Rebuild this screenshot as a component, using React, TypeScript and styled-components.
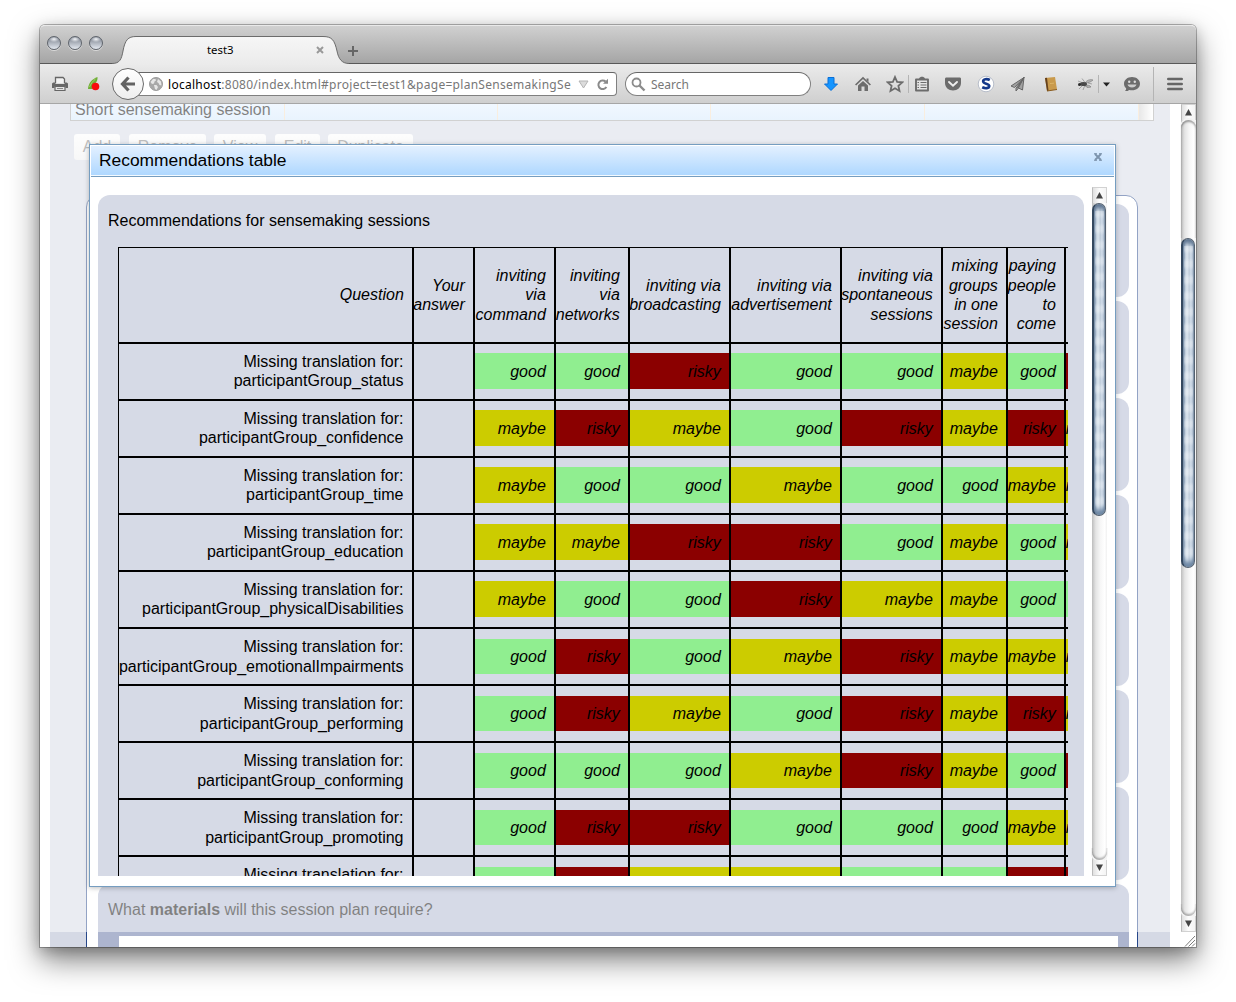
import React from "react";
import styled, { createGlobalStyle, css } from "styled-components";

const Global = createGlobalStyle`
  html, body { margin: 0; padding: 0; background: #fff; }
  * { box-sizing: border-box; }
  body { font-family: "Liberation Sans", Arial, sans-serif; font-size: 16px; color: #000; overflow: hidden; }
`;

/* ---------- window ---------- */

const Desktop = styled.div`
  width: 1236px;
  height: 1002px;
  padding: 25px 40px 0;
  overflow: hidden;
  background: #fff;
`;

const Window = styled.div`
  width: 1156px;
  height: 922px;
  display: flex;
  flex-direction: column;
  border-radius: 5px 5px 0 0;
  box-shadow: 0 0 0 1px rgba(0, 0, 0, 0.28), 0 13px 30px rgba(0, 0, 0, 0.5), 0 4px 14px rgba(0, 0, 0, 0.2);
`;

const TabStrip = styled.div`
  flex: none;
  height: 39px;
  display: flex;
  border-top: 1px solid #e9e9e9;
  border-radius: 5px 5px 0 0;
  background: linear-gradient(#d0d0d0, #a4a4a4);
  box-shadow: inset 0 -1px 0 #595959;
`;

const Lights = styled.div`
  display: flex;
  gap: 7px;
  padding: 10px 0 0 7px;
`;

const Light = styled.span`
  width: 14px;
  height: 14px;
  border-radius: 50%;
  border: 1px solid #5f646c;
  background: radial-gradient(ellipse 5px 3px at 50% 18%, #f4f6f9, transparent), linear-gradient(#777e8a, #a9afb9 45%, #e4e9f0);
  box-shadow: 0 1px 0 rgba(255, 255, 255, 0.5);
`;

const Tab = styled.div`
  position: relative;
  width: 244px;
  margin-left: 9px;
  height: 39px;
  display: flex;
  align-items: center;
  padding: 11px 0 0;
`;

const TabShape = styled.svg`
  position: absolute;
  left: 0;
  top: 0;
`;

const TabTitle = styled.span`
  position: relative;
  flex: 1;
  padding-left: 95px;
  font: 11.4px "Noto Sans", "Open Sans", sans-serif;
  line-height: 16px;
  margin-top: -2px;
`;

const TabClose = styled.svg`
  position: relative;
  margin: -2px 32px 0 0;
`;

const PlusIcon = styled.svg`
  margin: 19px 0 0 -9px;
`;

const Toolbar = styled.div`
  flex: none;
  height: 40px;
  display: flex;
  align-items: center;
  padding: 1px 0 0 11px;
  border-bottom: 1px solid #a6a6a6;
  background: linear-gradient(#ebebeb, #cfcfcf);
`;

const Icon = styled.svg<{ $gap: number }>`
  flex: none;
  margin-left: ${(p) => p.$gap}px;
`;

const Divider = styled.span<{ $gap: number; $h: number }>`
  flex: none;
  width: 1px;
  height: ${(p) => p.$h}px;
  margin-left: ${(p) => p.$gap}px;
  background: #b4b4b4;
`;

const BackButton = styled.div`
  position: relative;
  z-index: 1;
  flex: none;
  width: 32px;
  height: 32px;
  margin-left: 9px;
  display: flex;
  align-items: center;
  justify-content: center;
  border: 1px solid #6a6a6a;
  border-radius: 50%;
  background: linear-gradient(#fff, #eeeeee);
`;

const fieldBox = css`
  flex: none;
  height: 24px;
  display: flex;
  align-items: center;
  border: 1px solid #808080;
  border-top-color: #666;
  background: #fff;
  font: 12px "Noto Sans", "Open Sans", sans-serif;
  color: #777;
`;

const UrlBar = styled.div`
  ${fieldBox}
  width: 483px;
  margin-left: -10px;
  padding-left: 14px;
  border-radius: 0 4px 4px 0;
  white-space: nowrap;
`;

const UrlText = styled.span`
  width: 410px;
  margin-left: 5px;
  letter-spacing: 0.285px;
  b { color: #000; font-weight: normal; }
`;

const SearchBox = styled.div`
  ${fieldBox}
  width: 186px;
  margin-left: 8px;
  padding-left: 5px;
  gap: 5px;
  border-radius: 12px;
`;

const Viewport = styled.div`
  position: relative;
  flex: 1;
  display: flex;
  overflow: hidden;
  background: #fff;
`;

/* ---------- page below the dialog ---------- */

const Page = styled.div`
  width: 1120px;
  margin: 0 11px 0 10px;
  padding: 0 16px 0 20px;
  background: #d5d9e5;
  overflow: hidden;
`;

const Grid = styled.div`
  height: 17px;
  display: flex;
  border: 1px solid #a3a3a3;
  border-top: 0;
  background: linear-gradient(#e2f0ff, #d2e8fb);
`;

const GridCell = styled.div<{ $w: number }>`
  width: ${(p) => p.$w}px;
  padding-left: 4px;
  border-right: 1px solid #f2dcbe;
  line-height: 18px;
  margin-top: -4px;
  padding-top: 1px;
  white-space: nowrap;
`;

const GridGutter = styled.div`
  flex: 1;
  background: linear-gradient(90deg, #d0d0d0, #fff);
`;

const ButtonRow = styled.div`
  display: flex;
  padding: 13px 0 0 4px;
  height: 74px;
  align-items: flex-start;
`;

const PushButton = styled.span<{ $w: number; $gap: number }>`
  width: ${(p) => p.$w}px;
  height: 26px;
  margin-right: ${(p) => p.$gap}px;
  border-radius: 3px;
  line-height: 25px;
  text-align: center;
  color: #7c7c7c;
  background: linear-gradient(#fbfbfb, #efefef);
`;

const Questions = styled.div`
  width: 1052px;
  height: 800px;
  margin-left: 16px;
  padding: 8px 8px 0 11px;
  display: flex;
  flex-direction: column;
  gap: 4px;
  border: 1px solid #26478a;
  border-radius: 12px;
  background: #fff;
`;

const Question = styled.div<{ $last?: boolean }>`
  flex: none;
  height: ${(p) => (p.$last ? "200px" : "93.14px")};
  padding: 17px 11px 0 10px;
  border-radius: 12px;
  background: #adb5cf;
  line-height: 18px;
`;

const Answer = styled.div`
  height: 100px;
  margin: 17px 0 0 11px;
  background: #fff;
  width: 999px;
`;

const Mask = styled.div`
  position: absolute;
  left: 0;
  top: 0;
  width: 1141px;
  height: 828px;
  background: rgba(255, 255, 255, 0.5);
`;

/* ---------- aqua scroll bars ---------- */

const Bar = styled.div`
  flex: none;
  width: 15px;
  display: flex;
  flex-direction: column;
  background: linear-gradient(90deg, #bdbdbd, #e4e4e4 25%, #f6f6f6 55%, #fff 85%, #f0f0f0);
`;

const BarEnd = styled.div<{ $down?: boolean }>`
  flex: none;
  height: 16px;
  display: flex;
  align-items: center;
  justify-content: center;
  border: 1px solid #d2d2d2;
  border-left-color: #bbb;
  border-${(p) => (p.$down ? "top" : "bottom")}: 0;
  background: linear-gradient(90deg, #e0e0e0, #fcfcfc 50%, #f4f4f4);
`;

const TrackCap = styled.div<{ $h: number; $bottom?: boolean }>`
  flex: none;
  height: ${(p) => p.$h}px;
  border-radius: ${(p) => (p.$bottom ? "0 0 8px 8px" : "8px 8px 0 0")};
  box-shadow: ${(p) =>
    p.$bottom ? "inset 0 -2px 2px rgba(0,0,0,.28), 0 1px 0 1px #f2f2f2" : "inset 0 2px 2px rgba(0,0,0,.35), 0 -1px 0 1px #f2f2f2"};
`;

const Thumb = styled.div<{ $h: number }>`
  flex: none;
  width: 14px;
  height: ${(p) => p.$h}px;
  border-radius: 7px;
  border: 1px solid #53606f;
  border-left: 2px solid #34485f;
  box-shadow: inset 0 4px 4px #5d7490, inset 0 -5px 4px #6f89a6;
  background: linear-gradient(90deg, #9fb2c7, #e6eff7 25%, #d6e0ea 45%, #bdc9d6 55%, #dfebf6 72%, #f2f8fd 88%, #a9b4c0);
  position: relative;
  overflow: hidden;
  &::after {
    content: "";
    position: absolute;
    inset: 7px 1px;
    background: repeating-linear-gradient(rgba(255, 255, 255, 0.28) 0 4px, rgba(255, 255, 255, 0) 8px 12px, rgba(255, 255, 255, 0.28) 16px);
  }
`;

const Corner = styled.div`
  flex: none;
  height: 15px;
  padding: 3px 0 0 3px;
  background: #fff;
  line-height: 0;
`;

const Spacer = styled.div`
  flex: 1;
`;

/* ---------- dialog ---------- */

const Dialog = styled.div`
  position: absolute;
  left: 49px;
  top: 40px;
  width: 1027px;
  height: 743px;
  display: flex;
  flex-direction: column;
  border: 1px solid #759dc0;
  background: #fff;
  box-shadow: 0 1px 5px rgba(0, 0, 0, 0.25);
`;

const DialogHeader = styled.div`
  flex: none;
  height: 32px;
  display: flex;
  justify-content: space-between;
  padding: 5px 11px 0 8px;
  border: 1px solid #fff;
  border-bottom: 0;
  background: linear-gradient(#e3f0ff, #abd6ff);
  box-shadow: inset 0 -1px 0 #759dc0, inset 0 -2px 0 #f4faff;
  font-size: 17.4px;
  line-height: 18px;
`;

const DialogClose = styled.svg`
  margin-top: 1px;
`;

const DialogBody = styled.div`
  height: 699px;
  display: flex;
  padding: 10px 8px 0;
`;

const Sheet = styled.div`
  width: 986px;
  height: 681px;
  margin: 8px 8px 0 0;
  padding: 17px 16px 0 10px;
  border-radius: 12px 12px 0 0;
  background: #d6dae6;
  overflow: hidden;
`;

const SheetTitle = styled.div`
  height: 35px;
  line-height: 18px;
`;

const Table = styled.div`
  margin-left: 10px;
  width: 950px;
  overflow: hidden;
`;

const Row = styled.div<{ $head?: boolean }>`
  display: grid;
  grid-template-columns: 295px 61px 81px 74px 101px 111px 101px 65px 58px 58px;
  height: ${(p) => (p.$head ? 96 : 57)}px;
`;

const Cell = styled.div<{ $kind?: "head" | "plain"; $shift?: boolean }>`
  display: flex;
  flex-direction: column;
  justify-content: center;
  border: 1px solid #000;
  padding-bottom: ${(p) => (p.$kind === "plain" && !p.$shift ? 2 : 0)}px;
  text-align: right;
  font-style: ${(p) => (p.$kind === "plain" ? "normal" : "italic")};
  line-height: ${(p) => (p.$kind === "plain" ? (p.$shift ? 20 : 19) : 19.4)}px;
  white-space: nowrap;
`;

const Line = styled.span<{ $pad: number }>`
  padding-right: ${(p) => p.$pad}px;
  align-self: flex-end;
`;

const tones: Record<string, string> = { good: "#90ee90", maybe: "#cccc00", risky: "#8b0000" };

const Rating = styled.div<{ $tone: string; $shift: boolean }>`
  height: ${(p) => (p.$shift ? 35 : 36)}px;
  margin-bottom: ${(p) => (p.$shift ? 0 : 1)}px;
  padding: ${(p) => (p.$shift ? 8 : 9)}px 8.2px 0 0;
  display: flex;
  justify-content: flex-end;
  background: ${(p) => tones[p.$tone]};
`;

const heads = [
  ["Question"],
  ["Your", "answer"],
  ["inviting", "via", "command"],
  ["inviting", "via", "networks"],
  ["inviting via", "broadcasting"],
  ["inviting via", "advertisement"],
  ["inviting via", "spontaneous", "sessions"],
  ["mixing", "groups", "in one", "session"],
  ["paying", "people", "to", "come"],
  [],
];

const names: Record<string, string> = { g: "good", m: "maybe", r: "risky" };

const rows: [string, string][] = [
  ["status", "ggrggmgr"],
  ["confidence", "mrmgrmrm"],
  ["time", "mggmggmm"],
  ["education", "mmrrgmgm"],
  ["physicalDisabilities", "mggrmmgg"],
  ["emotionalImpairments", "grgmrmmm"],
  ["performing", "grmgrmrm"],
  ["conforming", "gggmrmgr"],
  ["promoting", "grrgggmm"],
  ["feelingAboutTopic", "grmmggrr"],
];

const buttons: [string, number, number][] = [
  ["Add", 46, 9],
  ["Remove", 77, 8],
  ["View", 52, 9],
  ["Edit", 45, 8],
  ["Duplicate", 85, 0],
];

const Arrow = ({ down }: { down?: boolean }) => (
  <svg width="7" height="7" viewBox="0 0 7 7">
    <path d={down ? "M0 .5h7L3.5 7z" : "M0 6.5h7L3.5 0z"} fill="#444" />
  </svg>
);

const ScrollBar = ({ cap, thumb }: { cap: number; thumb: number }) => (
  <>
    <BarEnd><Arrow /></BarEnd>
    {cap > 0 && <TrackCap $h={cap} />}
    <Thumb $h={thumb} />
    <Spacer />
    <TrackCap $h={12} $bottom />
    <BarEnd $down><Arrow down /></BarEnd>
  </>
);

const ScrollColumn = styled(Bar)`
  height: 828px;
`;

const InnerBar = styled(Bar)`
  height: 689px;
`;

const RightEdge = styled.div`
  width: 15px;
  display: flex;
  flex-direction: column;
`;

const ink = "#6c6c6c";

export default function App() {
  return (
    <Desktop>
      <Global />
      <Window>
        <TabStrip>
          <Lights>
            <Light />
            <Light />
            <Light />
          </Lights>
          <Tab>
            <TabShape width="244" height="39" viewBox="0 0 244 39">
              <defs>
                <linearGradient id="tab" x1="0" y1="0" x2="0" y2="1">
                  <stop offset="0" stopColor="#f6f6f6" />
                  <stop offset="1" stopColor="#ebebeb" />
                </linearGradient>
              </defs>
              <path d="M0 39V37.5C8 37.5 9.500 33 11 25C13 14 16 10.500 24 10.500H211C220 10.500 222.500 14 225 25C226.500 33 230 37.500 237 37.500V39z" fill="url(#tab)" />
              <path d="M0 37.500C8 37.500 9.500 33 11 25C13 14 16 10.500 24 10.500H211C220 10.500 222.500 14 225 25C226.500 33 230 37.500 237 37.500" fill="none" stroke="#6b6b6b" />
            </TabShape>
            <TabTitle>test3</TabTitle>
            <TabClose width="8" height="8" viewBox="0 0 8 8">
              <path d="M1 1l6 6M7 1L1 7" stroke="#999" strokeWidth="2" />
            </TabClose>
          </Tab>
          <PlusIcon width="12" height="12" viewBox="0 0 12 12">
            <path d="M6 1v10M1 6h10" stroke="#666" strokeWidth="2" />
          </PlusIcon>
        </TabStrip>

        <Toolbar>
          <Icon $gap={0} width="18" height="18" viewBox="0 0 18 18">
            <path d="M4.500 8V2.500h7.500l1.500 1.500v4" fill="#f2f2f2" stroke="#666" strokeWidth="1.300" />
            <path d="M1 9c0-1 1-1.500 2-1.500h1.500V9h9V7.500H15c1 0 2 .5 2 1.500v4h-2.500v-1.500h-11V13H1z" fill="#666" />
            <path d="M4 11.500h10V15.500H4z" fill="#e2e2e2" stroke="#666" strokeWidth="1.200" />
            <path d="M6 13.500h6" stroke="#888" />
          </Icon>
          <Icon $gap={16} width="18" height="18" viewBox="0 0 18 18">
            <path d="M3 14C3.500 8 7 4 12.500 2c.3 3-.8 5-2 6L7 14z" fill="#6fae35" />
            <path d="M4.500 12c1.500-3.500 3.500-6 6-8" stroke="#a5cf6a" strokeWidth="1" fill="none" />
            <circle cx="10.500" cy="11.500" r="3.800" fill="#f90b0b" />
          </Icon>
          <BackButton>
            <svg width="16" height="16" viewBox="0 0 16 16">
              <path d="M8.500 1.500L2.500 8l6 6.500M3 8h12" fill="none" stroke="#636363" strokeWidth="3.200" />
            </svg>
          </BackButton>
          <UrlBar>
            <svg width="14" height="14" viewBox="0 0 14 14">
              <circle cx="7" cy="7" r="6.500" fill="#a8a8a8" stroke="#9c9c9c" />
              <path d="M1.500 5l2.500-3 2.500 0 .5 1.500-1.500 1-.5 2-2 .5zM5 8l2.500 0 1.500 2-1.500 3-1.500-1zM9 2l3 2.500.5 4-2-.5-1-2-1.500-1z" fill="#e6e6e6" />
            </svg>
            <UrlText><b>localhost</b>:8080/index.html#project=test1&amp;page=planSensemakingSe</UrlText>
            <svg width="11" height="9" viewBox="0 0 11 9">
              <path d="M1 1h9L5.500 8z" fill="#dcdcdc" stroke="#b4b4b4" />
            </svg>
            <Icon $gap={7} width="13" height="13" viewBox="0 0 13 13">
              <path d="M9.600 3.600A4.300 4.300 0 1 0 10.400 9" fill="none" stroke="#8a8a8a" strokeWidth="2" />
              <path d="M7 5.800h5V.8z" fill="#8a8a8a" />
            </Icon>
          </UrlBar>
          <SearchBox>
            <svg width="15" height="15" viewBox="0 0 15 15">
              <circle cx="5.500" cy="5.500" r="4" fill="none" stroke="#8c8c8c" strokeWidth="1.800" />
              <path d="M8.500 8.500l5 5" stroke="#8c8c8c" strokeWidth="2.400" />
            </svg>
            Search
          </SearchBox>
          <Icon $gap={11} width="18" height="18" viewBox="0 0 18 18">
            <path d="M6 2.500h6V9h3.500L9 15.500 2.500 9H6z" fill="#1595ff" stroke="#0b6fd6" />
          </Icon>
          <Icon $gap={14} width="18" height="18" viewBox="0 0 18 18">
            <path d="M1.600 10L9 3l7.400 7" fill="none" stroke={ink} strokeWidth="1.700" />
            <path d="M12.500 3.500h2v3.500l-2-1.800z" fill={ink} />
            <path d="M4 10.500l5-4.500 5 4.500V16h-3.500v-4.500h-3V16H4z" fill={ink} />
          </Icon>
          <Icon $gap={14} width="18" height="18" viewBox="0 0 18 18">
            <path d="M9 2l2.100 4.800 5.200.5-3.900 3.500 1.100 5.100L9 13.200l-4.500 2.700 1.100-5.100L1.700 7.300l5.200-.5z" fill="none" stroke={ink} strokeWidth="1.800" />
          </Icon>
          <Divider $gap={4} $h={18} />
          <Icon $gap={4} width="18" height="18" viewBox="0 0 18 18">
            <path d="M3 4.500h12V15.500H3z" fill="#e4e4e4" stroke={ink} strokeWidth="1.900" strokeLinejoin="round" />
            <path d="M6 5V3.500C7 1 11 1 12 3.500V5z" fill={ink} />
            <path d="M4.500 7.500h1.500M7.500 7.500h6M4.500 10h1.500M7.500 10h6M4.500 12.500h1.500M7.500 12.500h6" stroke={ink} strokeWidth="1.200" />
          </Icon>
          <Icon $gap={13} width="18" height="18" viewBox="0 0 18 18">
            <path d="M2.500 2.500h13c1 0 1.500.5 1.500 1.500v4c0 4.500-3.500 7.500-8 7.500S1 12.500 1 8V4c0-1 .5-1.500 1.500-1.500z" fill={ink} />
            <path d="M5 7l4 3.800L13 7" fill="none" stroke="#eee" strokeWidth="1.900" strokeLinecap="round" />
          </Icon>
          <Icon $gap={15} width="18" height="18" viewBox="0 0 18 18">
            <circle cx="9" cy="9" r="7.800" fill="#fff" stroke="#b7bdc9" />
            <path d="M12.800 5C10 3.600 6 4 6.200 6.500c.2 2.600 6 1.800 6 4.500 0 2.600-4 2.800-7 1.300" fill="none" stroke="#15398a" strokeWidth="2.700" />
          </Icon>
          <Icon $gap={14} width="18" height="18" viewBox="0 0 18 18">
            <path d="M15 2.500L2 11l3.500 1.500zM15 2.500L7 13v3l2-2.300zM15 2.500L8.500 12.500l5 2.500z" fill="#a2a2a2" stroke="#666" strokeWidth="1" strokeLinejoin="round" />
          </Icon>
          <Icon $gap={15} width="18" height="18" viewBox="0 0 18 18">
            <path d="M3 3l10-1 2 12.500L5 16z" fill="#c99a4c" />
            <path d="M3 3l2-.2L6.500 15.800 5 16z" fill="#64401d" />
            <path d="M5 16l10-1.500" stroke="#8a5c20" />
            <path d="M8.500 8.500l4-.4" stroke="#f0d080" strokeDasharray="1 1" />
          </Icon>
          <Icon $gap={16} width="18" height="18" viewBox="0 0 18 18">
            <path d="M2 6l5 2M3 14l4-4M7 15l2-5M12 13l-2-3M6 3.500l3 4M16 9l-4-1" stroke="#888" strokeWidth=".7" />
            <path d="M9 8c2-3 5-4 8-3-2 2-5 3-8 3zM8 10c3 0 6 0 7 2-3 1-5 0-7-2z" fill="#b4b4b4" stroke="#777" strokeWidth=".6" />
            <ellipse cx="7.500" cy="9" rx="3.500" ry="2.100" fill="#4a4a4a" />
            <circle cx="3.500" cy="9.500" r="1.500" fill="#2c2c2c" />
          </Icon>
          <Divider $gap={4} $h={18} />
          <Icon $gap={4} width="7" height="5" viewBox="0 0 7 5">
            <path d="M0 .5h7L3.500 4.500z" fill="#222" />
          </Icon>
          <Icon $gap={13} width="18" height="18" viewBox="0 0 18 18">
            <path d="M9 2c4.500 0 8 2.900 8 6.700s-3.500 6.600-8 6.600c-1 0-2-.1-2.900-.4C5 16 3.500 16.300 2 16c1-1 1.200-1.800 1.100-2.800C1.700 12 1 10.500 1 8.700 1 4.900 4.500 2 9 2z" fill={ink} />
            <circle cx="6.200" cy="6.800" r="1.200" fill="#ddd" />
            <circle cx="11.800" cy="6.800" r="1.200" fill="#ddd" />
            <path d="M4.500 9.500h9c-.8 4-8.200 4-9 0z" fill="#ccc" />
          </Icon>
          <Divider $gap={12} $h={34} />
          <Icon $gap={13} width="16" height="14" viewBox="0 0 16 14">
            <path d="M1.300 2h13.400M1.300 7h13.400M1.300 12h13.400" stroke="#666" strokeWidth="2.600" strokeLinecap="round" />
          </Icon>
        </Toolbar>

        <Viewport>
          <Page>
            <Grid>
              <GridCell $w={214}>Short sensemaking session</GridCell>
              <GridCell $w={213} />
              <GridCell $w={213} />
              <GridCell $w={214} />
              <GridCell $w={214} />
              <GridGutter />
            </Grid>
            <ButtonRow>
              {buttons.map(([label, w, gap]) => (
                <PushButton key={label} $w={w} $gap={gap}>{label}</PushButton>
              ))}
            </ButtonRow>
            <Questions>
              {[0, 1, 2, 3, 4, 5, 6].map((i) => <Question key={i} />)}
              <Question $last>
                What <b>materials</b> will this session plan require?
                <Answer />
              </Question>
            </Questions>
          </Page>
          <Mask />
          <RightEdge>
            <ScrollColumn>
              <ScrollBar cap={118} thumb={330} />
            </ScrollColumn>
            <Corner>
              <svg width="12" height="12" viewBox="0 0 12 12">
                <path d="M1 11.500L11 1M4.500 11.500L11 5M8 11.500L11 8.500" stroke="#7c7c7c" />
              </svg>
            </Corner>
          </RightEdge>

          <Dialog>
            <DialogHeader>
              <span>Recommendations table</span>
              <DialogClose width="10" height="10" viewBox="0 0 10 10">
                <path d="M2 2l6 6M8 2L2 8" stroke="#7d94ad" strokeWidth="1.900" />
                <path d="M1 1.700h3M6 1.700h3M1 8.300h3M6 8.300h3" stroke="#7d94ad" />
              </DialogClose>
            </DialogHeader>
            <DialogBody>
              <Sheet>
                <SheetTitle>Recommendations for sensemaking sessions</SheetTitle>
                <Table>
                  <Row $head>
                    {heads.map((lines, i) => (
                      <Cell key={i} $kind="head">
                        {lines.map((l) => <Line key={l} $pad={8.2}>{l}</Line>)}
                      </Cell>
                    ))}
                  </Row>
                  {rows.map(([name, marks], r) => (
                    <Row key={name}>
                      <Cell $kind="plain" $shift={r > 4}>
                        <Line $pad={8.5}>Missing translation for:</Line>
                        <Line $pad={8.5}>participantGroup_{name}</Line>
                      </Cell>
                      <Cell />
                      {marks.split("").map((m, c) => (
                        <Cell key={c}>
                          <Rating $tone={names[m]} $shift={r > 4}>{names[m]}</Rating>
                        </Cell>
                      ))}
                    </Row>
                  ))}
                </Table>
              </Sheet>
              <InnerBar>
                <ScrollBar cap={0} thumb={313} />
              </InnerBar>
            </DialogBody>
          </Dialog>
        </Viewport>
      </Window>
    </Desktop>
  );
}
